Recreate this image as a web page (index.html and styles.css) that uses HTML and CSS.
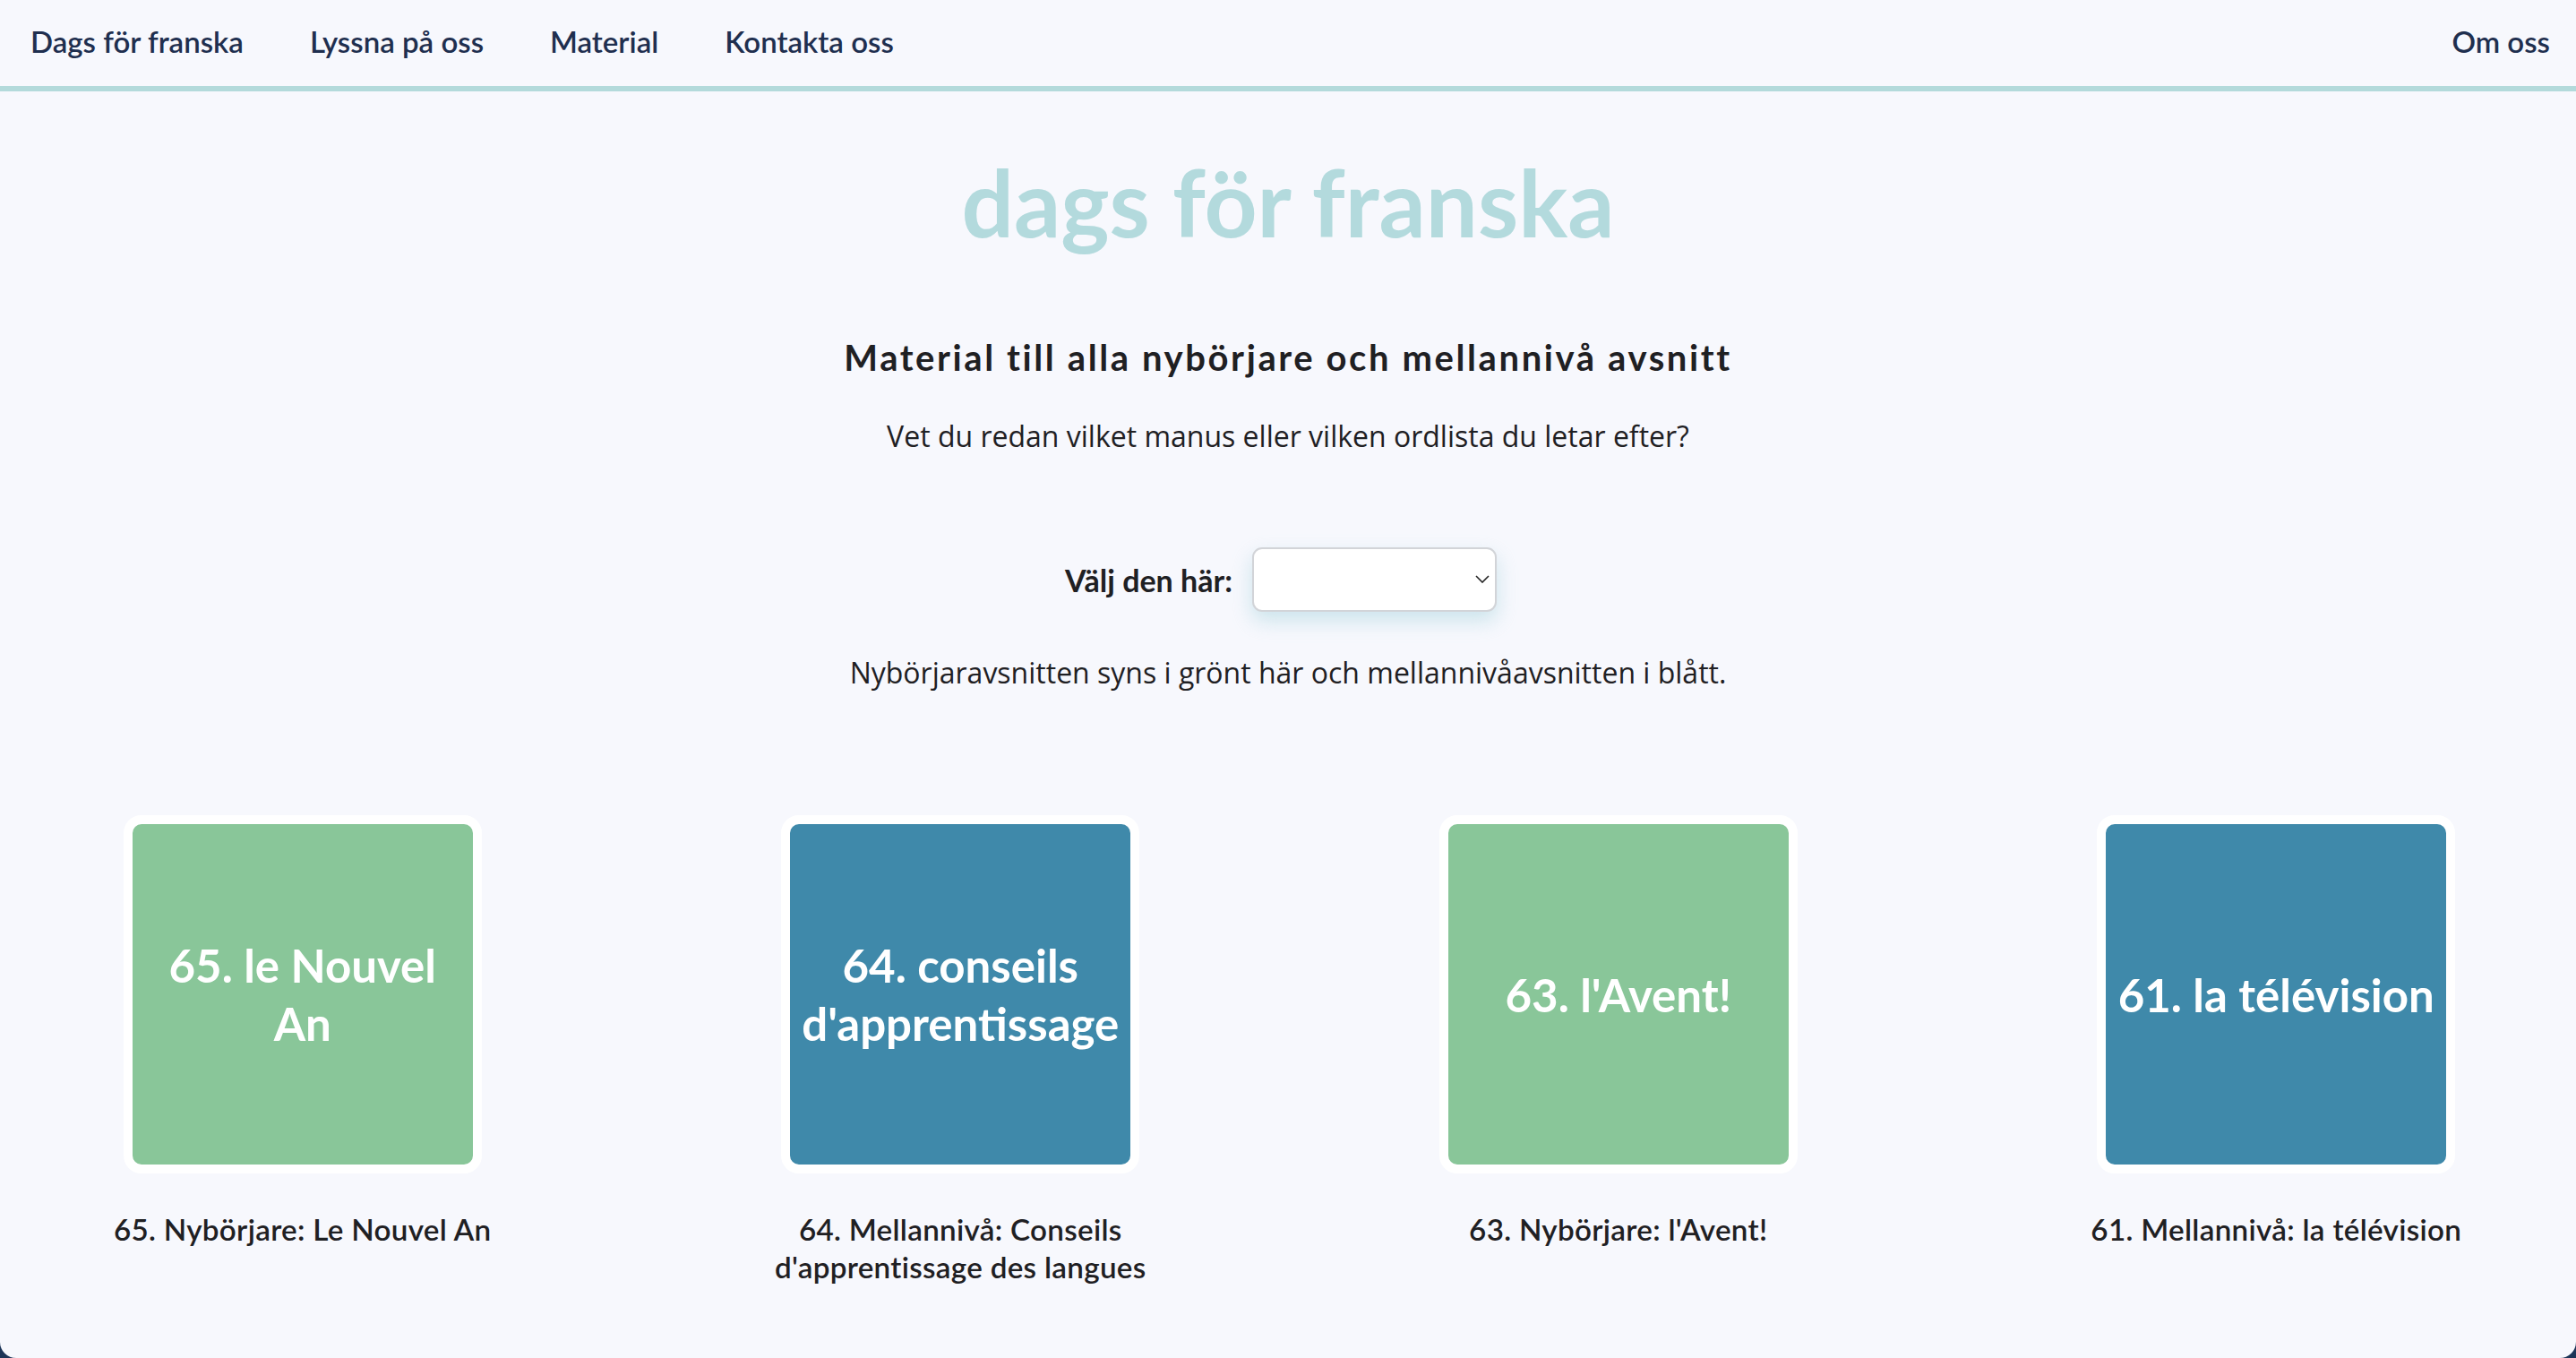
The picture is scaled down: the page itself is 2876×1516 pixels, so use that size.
FILE: index.html
```html
<!DOCTYPE html>
<html lang="sv">
<head>
<meta charset="utf-8">
<title>Material – dags för franska</title>
<link rel="stylesheet" href="styles.css">
</head>
<body>
<div class="page">
  <nav class="topnav">
    <ul class="nav-left">
      <li><a href="#">Dags för franska</a></li>
      <li><a href="#">Lyssna på oss</a></li>
      <li><a href="#">Material</a></li>
      <li><a href="#">Kontakta oss</a></li>
    </ul>
    <a class="nav-right" href="#">Om oss</a>
  </nav>

  <main class="content">
    <h1 class="site-title">dags för franska</h1>
    <h2 class="heading">Material till alla nybörjare och mellannivå avsnitt</h2>
    <p class="lead">Vet du redan vilket manus eller vilken ordlista du letar efter?</p>

    <div class="picker">
      <label class="picker-label" for="ep">Välj den här:</label>
      <div class="select-wrap">
        <select id="ep" class="select">
          <option></option>
        </select>
        <svg class="chevron" width="16" height="9" viewBox="0 0 16 9" aria-hidden="true"><path d="M1 1 L8 8 L15 1" fill="none" stroke="#222" stroke-width="1.6"/></svg>
      </div>
    </div>

    <p class="lead note">Nybörjaravsnitten syns i grönt här och mellannivåavsnitten i blått.</p>

    <section class="grid">
      <a class="item" href="#">
        <div class="tile green"><span>65. le Nouvel An</span></div>
        <p class="caption">65. Nybörjare: Le Nouvel An</p>
      </a>
      <a class="item" href="#">
        <div class="tile blue"><span>64. conseils d'apprentissage</span></div>
        <p class="caption">64. Mellannivå: Conseils d'apprentissage des langues</p>
      </a>
      <a class="item" href="#">
        <div class="tile green"><span>63. l'Avent!</span></div>
        <p class="caption">63. Nybörjare: l'Avent!</p>
      </a>
      <a class="item" href="#">
        <div class="tile blue"><span>61. la télévision</span></div>
        <p class="caption">61. Mellannivå: la télévision</p>
      </a>
    </section>
  </main>
</div>
</body>
</html>
```
FILE: styles.css
```css
html {
  background: #1d3557;
}
body {
  margin: 0;
}
.page {
  min-height: 1516px;
  box-sizing: border-box;
  background: #f7f8fd;
  border-radius: 0 0 18px 18px;
  overflow: hidden;
}

/* nav */
.topnav {
  display: flex;
  justify-content: space-between;
  align-items: flex-start;
  height: 70px;
  padding: 26px 29px 0 34px;
  border-bottom: 6px solid #b3dadb;
  font-family: "Lato", "Liberation Sans", sans-serif;
  font-weight: 600;
  font-size: 33px;
  line-height: 40px;
}
.topnav ul {
  display: flex;
  gap: 74px;
  list-style: none;
  margin: 0;
  padding: 0;
}
.topnav a {
  color: #1f2f4f;
  text-decoration: none;
}

/* content */
.content {
  display: flex;
  flex-direction: column;
  align-items: center;
  text-align: center;
}
.site-title {
  margin: 62px 0 0;
  font-family: "Lato", "Liberation Sans", sans-serif;
  font-weight: 700;
  font-size: 103px;
  line-height: 1.2;
  color: #b3dadd;
}
.heading {
  margin: 87px 0 0;
  font-family: "Lato", "Liberation Sans", sans-serif;
  font-weight: 700;
  font-size: 40px;
  line-height: 48px;
  letter-spacing: 2.6px;
  color: #1f2023;
}
.lead {
  margin: 42px 0 0;
  font-family: "Open Sans", "Noto Sans", sans-serif;
  font-size: 32px;
  line-height: 44.8px;
  color: #1f2023;
}
.picker {
  display: flex;
  align-items: center;
  gap: 22px;
  margin: 102px 16px 0 0;
}
.picker-label {
  font-family: "Lato", "Liberation Sans", sans-serif;
  font-weight: 700;
  font-size: 34px;
  color: #1f2023;
}
.select-wrap {
  position: relative;
}
.select {
  display: block;
  width: 273px;
  height: 72px;
  box-sizing: border-box;
  background: #fff;
  border: 2px solid #d2d4d8;
  border-radius: 11px;
  box-shadow: 0 10px 22px rgba(150, 205, 215, 0.45);
  appearance: none;
  -webkit-appearance: none;
  font-size: 28px;
}
.chevron {
  position: absolute;
  right: 8px;
  top: 31px;
  pointer-events: none;
}
.note {
  margin-top: 46px;
}

/* grid */
.grid {
  align-self: stretch;
  display: grid;
  grid-template-columns: repeat(4, 1fr);
  column-gap: 265px;
  padding: 0 100px 0 103px;
  margin-top: 136px;
}
.item {
  display: flex;
  flex-direction: column;
  align-items: center;
  text-decoration: none;
}
.tile {
  width: 368px;
  height: 380px;
  padding: 0 6px;
  border: 10px solid #fff;
  border-radius: 20px;
  display: flex;
  align-items: center;
  justify-content: center;
  font-family: "Lato", "Liberation Sans", sans-serif;
  font-weight: 700;
  font-size: 51px;
  line-height: 65px;
  color: #fff;
  text-align: center;
}
.green {
  background: #89c699;
}
.blue {
  background: #3f89aa;
}
.caption {
  margin: 41px 0 0;
  font-family: "Lato", "Liberation Sans", sans-serif;
  font-weight: 600;
  font-size: 33.2px;
  line-height: 42px;
  letter-spacing: 0.3px;
  color: #1f2023;
}
```
